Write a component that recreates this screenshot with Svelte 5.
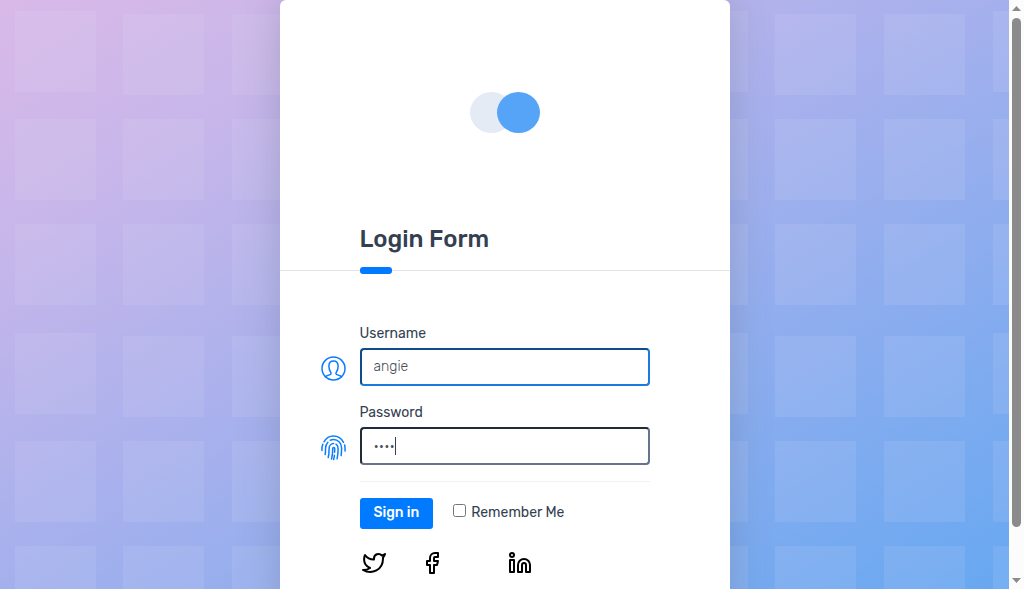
<script>
  let username = $state('angie');
  let password = $state('pass');
  let remember = $state(false);

  const tiles = [
    [15, 11], [123, 14], [232, 14],
    [15, 119], [123, 119], [232, 119],
    [15, 224], [123, 224], [232, 224]
  ];
</script>

<div class="window">
  <div class="page">
    <svg class="tiles" aria-hidden="true">
      <defs>
        <pattern id="tile-grid" width="326" height="322" patternUnits="userSpaceOnUse">
          {#each tiles as [x, y]}
            <rect {x} {y} width="81" height="81" fill="#dfe6f2" fill-opacity="0.11" />
          {/each}
        </pattern>
      </defs>
      <rect width="100%" height="100%" fill="url(#tile-grid)" />
    </svg>

    <main class="card">
      <header class="brand">
        <svg width="70" height="42" viewBox="0 0 70 42" aria-hidden="true">
          <ellipse cx="21.5" cy="20.5" rx="21.5" ry="20.5" fill="#e4ebf4" />
          <ellipse cx="48.5" cy="20.5" rx="21.5" ry="20.5" fill="#55a4f8" />
        </svg>
      </header>

      <div class="title">
        <h1>Login Form</h1>
      </div>

      <form onsubmit={(e) => e.preventDefault()}>
        <div class="field">
          <label for="username">Username</label>
          <div class="control">
            <svg class="icon" viewBox="0 0 26 26" aria-hidden="true">
              <circle cx="12.5" cy="12.5" r="11.500" />
              <path d="M4.500 20.700c1.200-1 3-1.600 4.600-2.100 1-.3 1.200-1.600.6-2.400C8.500 14.500 7.900 12.300 7.900 10.200 7.900 7.100 9.800 5.100 12.500 5.100s4.600 2 4.600 5.100c0 2.100-.6 4.300-1.800 6-.6.8-.4 2.100.6 2.400 1.600.5 3.400 1.100 4.600 2.100" />
            </svg>
            <input id="username" class="text name" type="text" bind:value={username} />
          </div>
        </div>

        <div class="field">
          <label for="password">Password</label>
          <div class="control">
            <svg class="icon" viewBox="0 0 26 26" aria-hidden="true">
              <path d="M3 6.800C5 3.300 8.500 1 12.500 1c4.300 0 8 2.500 10 6.300" />
              <path d="M1 15.500c-.2-2.100.1-4.300.8-6.200M23.600 10c.5 1.800.6 3.500.4 6" />
              <path d="M4.100 19.500c.6-2 .4-4 .4-6 0-2.500.9-4.700 2.400-6.300M9.300 5.200c1-.4 2-.6 3.200-.6 4.600 0 8.100 3.600 8.100 8.400 0 2.500 0 4.800-.5 7.500" />
              <path d="M7.200 22.500c.8-2.700.9-5.700.9-9 0-2.900 1.900-5 4.500-5M15 9.200c1.300.8 2.100 2.400 2.100 4.300 0 3.700-.2 6.700-1 10.300" />
              <path d="M10.500 24c1.100-3.500 1.200-6.800 1.200-10.500 0-1.300 2-1.300 2 0 0 1.200 0 2.500-.1 3.700M13.400 20.200c-.1 1.600-.4 3-.8 4.300" />
            </svg>
            <input id="password" class="text secret" type="password" bind:value={password} />
            <span class="caret" aria-hidden="true"></span>
          </div>
        </div>

        <div class="actions">
          <button type="submit">Sign in</button>
          <div class="remember">
            <input id="remember" type="checkbox" bind:checked={remember} />
            <label for="remember">Remember Me</label>
          </div>
        </div>
      </form>

      <nav class="social">
        <a href="#twitter" aria-label="Twitter">
          <svg viewBox="0 0 24 24"><path d="M23 3a10.900 10.900 0 0 1-3.140 1.530 4.480 4.480 0 0 0-7.860 3v1A10.660 10.660 0 0 1 3 4s-4 9 5 13a11.640 11.640 0 0 1-7 2c9 5 20 0 20-11.500a4.500 4.500 0 0 0-.080-.830A7.720 7.720 0 0 0 23 3z" /></svg>
        </a>
        <a href="#facebook" aria-label="Facebook">
          <svg viewBox="0 0 24 24"><path d="M18 2h-3a5 5 0 0 0-5 5v3H7v4h3v8h4v-8h3l1-4h-4V7a1 1 0 0 1 1-1h3z" /></svg>
        </a>
        <a class="last" href="#linkedin" aria-label="LinkedIn">
          <svg viewBox="0 0 24 24">
            <path d="M16 8a6 6 0 0 1 6 6v7h-4v-7a2 2 0 0 0-4 0v7h-4v-7a6 6 0 0 1 6-6z" />
            <rect x="2" y="9" width="4" height="12" />
            <circle cx="4" cy="4" r="2" />
          </svg>
        </a>
      </nav>
    </main>
  </div>

  <div class="scrollbar" aria-hidden="true">
    <svg viewBox="0 0 9 5"><path d="M0 5 4.500 0 9 5z" /></svg>
    <div class="track"><div class="thumb"></div></div>
    <svg viewBox="0 0 9 5"><path d="M0 0 4.500 5 9 0z" /></svg>
  </div>
</div>

<style>
  .window {
    display: flex;
    height: 100vh;
    font-family: Rubik, Inter, sans-serif;
    font-size: 14px;
    color: #343f52;
  }

  .window *,
  .window {
    box-sizing: border-box;
  }

  .page {
    position: relative;
    flex: 1;
    display: flex;
    justify-content: center;
    overflow: hidden;
    background: linear-gradient(to bottom right, #d9b9e8, #c8b6ea 20%, #a4b0ed 50%, #67a8f1);
  }

  .tiles {
    position: absolute;
    inset: 0;
    width: 100%;
    height: 100%;
  }

  .card {
    position: relative;
    width: 450px;
    min-height: 640px;
    flex-shrink: 0;
    background: #fff;
    border-radius: 6px;
    box-shadow: 0 0 40px rgba(80, 90, 110, 0.28);
  }

  .brand {
    display: flex;
    justify-content: center;
    padding: 92px 0 86px;
  }

  .brand svg {
    display: block;
  }

  .title {
    position: relative;
    padding: 0 80px 12px;
    border-bottom: 1px solid #e2e5e8;
  }

  .title::after {
    content: '';
    position: absolute;
    left: 80px;
    bottom: -4px;
    width: 32px;
    height: 7px;
    border-radius: 3px;
    background: #007bff;
  }

  h1 {
    margin: 0;
    font-size: 24px;
    line-height: 38px;
    font-weight: 500;
  }

  form {
    padding: 52px 80px 0;
  }

  .field {
    margin-bottom: 16px;
  }

  .field label {
    display: block;
    line-height: 21px;
    margin-bottom: 4px;
  }

  .control {
    position: relative;
  }

  .icon {
    position: absolute;
    left: -39px;
    top: 8px;
    width: 26px;
    height: 26px;
    fill: none;
    stroke: #0a7cff;
    stroke-width: 1.5;
    stroke-linecap: round;
  }

  .text {
    display: block;
    width: 100%;
    height: 38px;
    padding: 0 12px 2px;
    border: 2px solid;
    border-radius: 4px;
    background: #fff;
    font-family: inherit;
    font-size: 14px;
    font-weight: 300;
    color: #495057;
    outline: none;
  }

  .name {
    border-color: #0f4c8a #1a7bdc #1a7bdc #0f4c8a;
  }

  .secret {
    padding-bottom: 0;
    border-color: #212b38 #64748b #64748b #212b38;
  }

  .caret {
    position: absolute;
    left: 35px;
    top: 10px;
    width: 1px;
    height: 18px;
    background: #343f52;
  }

  .actions {
    display: flex;
    align-items: center;
    padding-top: 16px;
    border-top: 1px solid #eff1f2;
  }

  button {
    padding: 6px 14px 8px;
    border: 0;
    border-radius: 3px;
    background: #007bff;
    color: #fff;
    font-family: inherit;
    font-size: 14px;
    line-height: 17px;
    font-weight: 500;
  }

  .remember {
    display: flex;
    align-items: flex-start;
    gap: 5px;
    margin-left: 20px;
    padding-bottom: 2px;
  }

  .remember input {
    width: 13px;
    height: 13px;
    margin: 0;
  }

  .social {
    display: flex;
    padding: 22px 80px 0 82px;
    gap: 34px;
  }

  .social svg {
    display: block;
    width: 24px;
    height: 24px;
    fill: none;
    stroke: #000;
    stroke-width: 2;
    stroke-linecap: round;
    stroke-linejoin: round;
  }

  .last {
    margin-left: 30px;
  }

  .scrollbar {
    display: flex;
    flex-direction: column;
    align-items: center;
    flex: 0 0 15px;
    padding: 6px 0;
    background: #fcfcfc;
  }

  .scrollbar svg {
    width: 9px;
    height: 5px;
    fill: #8b8b8b;
  }

  .track {
    flex: 1;
    padding: 7px 0;
  }

  .thumb {
    width: 9px;
    height: 92%;
    border-radius: 5px;
    background: #8b8b8b;
  }
</style>
